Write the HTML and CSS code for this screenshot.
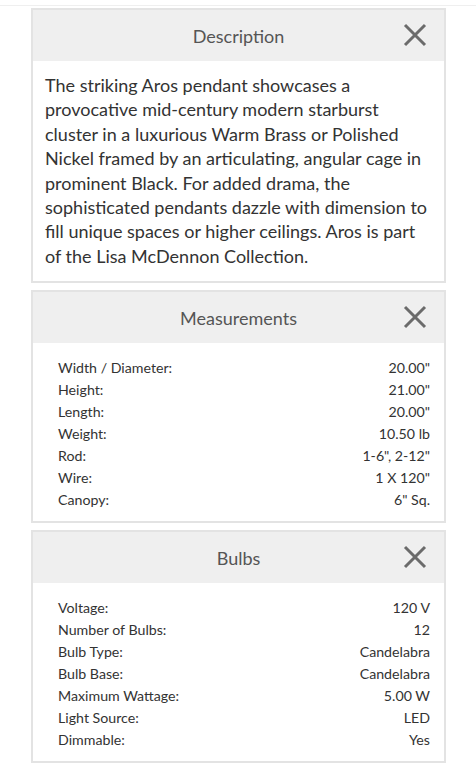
FILE: index.html
```html
<!DOCTYPE html>
<html>
<head>
<meta charset="utf-8">
<link rel="stylesheet" href="styles.css">
</head>
<body>
<div class="topline"></div>
<div class="page">
  <section class="card">
    <div class="card-head">
      <h2 class="card-title">Description</h2>
      <span class="close"><svg viewBox="0 0 24 24" width="24" height="24"><path d="M2 2 L22 22 M22 2 L2 22" stroke="#6b6b6b" stroke-width="3" fill="none"/></svg></span>
    </div>
    <div class="card-body desc">
      The striking Aros pendant showcases a provocative mid-century modern starburst cluster in a luxurious Warm Brass or Polished Nickel framed by an articulating, angular cage in prominent Black. For added drama, the sophisticated pendants dazzle with dimension to fill unique spaces or higher ceilings. Aros is part of the Lisa McDennon Collection.
    </div>
  </section>

  <section class="card">
    <div class="card-head">
      <h2 class="card-title">Measurements</h2>
      <span class="close"><svg viewBox="0 0 24 24" width="24" height="24"><path d="M2 2 L22 22 M22 2 L2 22" stroke="#6b6b6b" stroke-width="3" fill="none"/></svg></span>
    </div>
    <div class="card-body specs">
      <div class="row"><span>Width / Diameter:</span><span>20.00"</span></div>
      <div class="row"><span>Height:</span><span>21.00"</span></div>
      <div class="row"><span>Length:</span><span>20.00"</span></div>
      <div class="row"><span>Weight:</span><span>10.50 lb</span></div>
      <div class="row"><span>Rod:</span><span>1-6", 2-12"</span></div>
      <div class="row"><span>Wire:</span><span>1 X 120"</span></div>
      <div class="row"><span>Canopy:</span><span>6" Sq.</span></div>
    </div>
  </section>

  <section class="card">
    <div class="card-head">
      <h2 class="card-title">Bulbs</h2>
      <span class="close"><svg viewBox="0 0 24 24" width="24" height="24"><path d="M2 2 L22 22 M22 2 L2 22" stroke="#6b6b6b" stroke-width="3" fill="none"/></svg></span>
    </div>
    <div class="card-body specs">
      <div class="row"><span>Voltage:</span><span>120 V</span></div>
      <div class="row"><span>Number of Bulbs:</span><span>12</span></div>
      <div class="row"><span>Bulb Type:</span><span>Candelabra</span></div>
      <div class="row"><span>Bulb Base:</span><span>Candelabra</span></div>
      <div class="row"><span>Maximum Wattage:</span><span>5.00 W</span></div>
      <div class="row"><span>Light Source:</span><span>LED</span></div>
      <div class="row"><span>Dimmable:</span><span>Yes</span></div>
    </div>
  </section>
</div>
</body>
</html>
```

FILE: styles.css
```css
html, body {
  margin: 0;
  padding: 0;
  background: #fff;
}
body {
  font-family: Lato, "Open Sans", sans-serif;
  color: #333;
}
.topline {
  height: 5px;
  border-bottom: 1px solid #efefef;
}
.page {
  padding: 2px 30px 0 31px;
  display: flex;
  flex-direction: column;
  gap: 7px;
}
.card {
  border: 2px solid #e3e3e3;
  background: #fff;
}
.card-head {
  position: relative;
  height: 51px;
  background: #efefef;
  display: flex;
  align-items: center;
  justify-content: center;
}
.card-title {
  margin: 0;
  font-size: 18px;
  font-weight: 400;
  color: #555;
}
.close {
  position: absolute;
  right: 17px;
  top: 13px;
  width: 24px;
  height: 24px;
  display: block;
}
.close svg { display: block; }
.desc {
  padding: 12px 12px 13px 12px;
  font-size: 18px;
  line-height: 24.4px;
  color: #333;
}
.specs {
  padding: 14px 14px 10px 25px;
  font-size: 14.2px;
  line-height: 22px;
  color: #333;
}
.row {
  display: flex;
  justify-content: space-between;
}
```
